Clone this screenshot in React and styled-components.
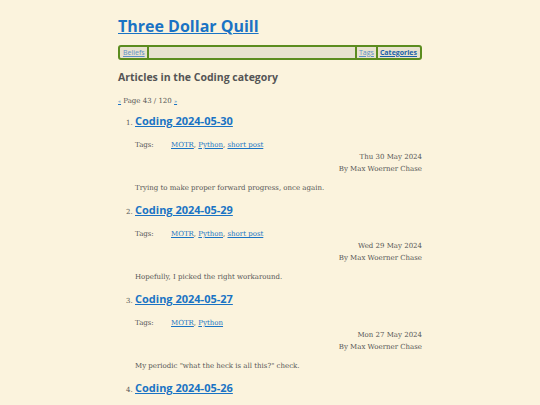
import styled, { createGlobalStyle } from 'styled-components'

const GlobalStyle = createGlobalStyle`
   body {
      margin: 0;
      background: #fbf3dd;
      font-family: "DejaVu Serif", serif;
      color: #555;
   }
`

const Page = styled.div`
   width: 304px;
   margin: 0 auto;
   padding-top: 15px;
`

const SiteTitle = styled.h1`
   margin: 0 0 8px;
   font-family: "Open Sans", sans-serif;
   font-size: 16px;
   font-weight: 700;
   line-height: 22px;
   a {
      color: #1a73c4;
   }
`

const Nav = styled.nav`
   display: flex;
   align-items: center;
   height: 11px;
   padding: 0 2px;
   background: #e8e2cf;
   border: 2px solid #5b8c1f;
   border-radius: 3px;
   font-family: "Open Sans", sans-serif;
   font-size: 7px;
`

const NavLink = styled.a`
   color: ${(props) => (props.$active ? '#1a5fa8' : '#5a8fc6')};
   font-weight: ${(props) => (props.$active ? 700 : 400)};
   padding: 0 1px;
`

const Bar = styled.span`
   width: 2px;
   height: 11px;
   background: #5b8c1f;
   margin: 0 1px;
`

const Spacer = styled.span`
   flex: 1;
`

const Heading = styled.h2`
   margin: 9px 0 10px;
   font-family: "Open Sans", sans-serif;
   font-size: 10.5px;
   line-height: 16px;
   color: #555;
`

const Pager = styled.p`
   margin: 0;
   font-size: 7px;
   line-height: 12px;
   a {
      color: #1a73c4;
      font-size: 5px;
   }
`

const List = styled.ol`
   margin: 6px 0 0;
   padding-left: 17px;
   font-size: 7px;
`

const Item = styled.li`
   margin-bottom: 8px;
   &::marker {
      color: #555;
   }
`

const Title = styled.a`
   font-family: "Open Sans", sans-serif;
   font-size: 11px;
   font-weight: 700;
   line-height: 16px;
   color: #1a73c4;
`

const Tags = styled.div`
   display: flex;
   margin-top: 10px;
   line-height: 12px;
   a {
      color: #1a73c4;
   }
`

const TagLabel = styled.span`
   width: 36px;
`

const Meta = styled.div`
   text-align: right;
   line-height: 12px;
`

const Summary = styled.p`
   margin: 7px 0 0;
   line-height: 12px;
`

const articles = [
   {
      title: 'Coding 2024-05-30',
      tags: ['MOTR', 'Python', 'short post'],
      date: 'Thu 30 May 2024',
      summary: 'Trying to make proper forward progress, once again.',
   },
   {
      title: 'Coding 2024-05-29',
      tags: ['MOTR', 'Python', 'short post'],
      date: 'Wed 29 May 2024',
      summary: 'Hopefully, I picked the right workaround.',
   },
   {
      title: 'Coding 2024-05-27',
      tags: ['MOTR', 'Python'],
      date: 'Mon 27 May 2024',
      summary: 'My periodic "what the heck is all this?" check.',
   },
   {
      title: 'Coding 2024-05-26',
      tags: ['MOTR', 'Python'],
      date: 'Sun 26 May 2024',
      summary: '',
   },
]

export default function App() {
   return (
      <Page>
         <GlobalStyle />
         <SiteTitle>
            <a href="#">Three Dollar Quill</a>
         </SiteTitle>
         <Nav>
            <NavLink href="#">Beliefs</NavLink>
            <Bar />
            <Spacer />
            <Bar />
            <NavLink href="#">Tags</NavLink>
            <Bar />
            <NavLink href="#" $active>
               Categories
            </NavLink>
         </Nav>
         <Heading>Articles in the Coding category</Heading>
         <Pager>
            <a href="#">«</a> Page 43 / 120 <a href="#">»</a>
         </Pager>
         <List>
            {articles.map((a) => (
               <Item key={a.title}>
                  <Title href="#">{a.title}</Title>
                  <Tags>
                     <TagLabel>Tags:</TagLabel>
                     <span>
                        {a.tags.map((t, i) => (
                           <span key={t}>
                              <a href="#">{t}</a>
                              {i < a.tags.length - 1 ? ', ' : ''}
                           </span>
                        ))}
                     </span>
                  </Tags>
                  <Meta>
                     {a.date}
                     <br />
                     By Max Woerner Chase
                  </Meta>
                  <Summary>{a.summary}</Summary>
               </Item>
            ))}
         </List>
      </Page>
   )
}
